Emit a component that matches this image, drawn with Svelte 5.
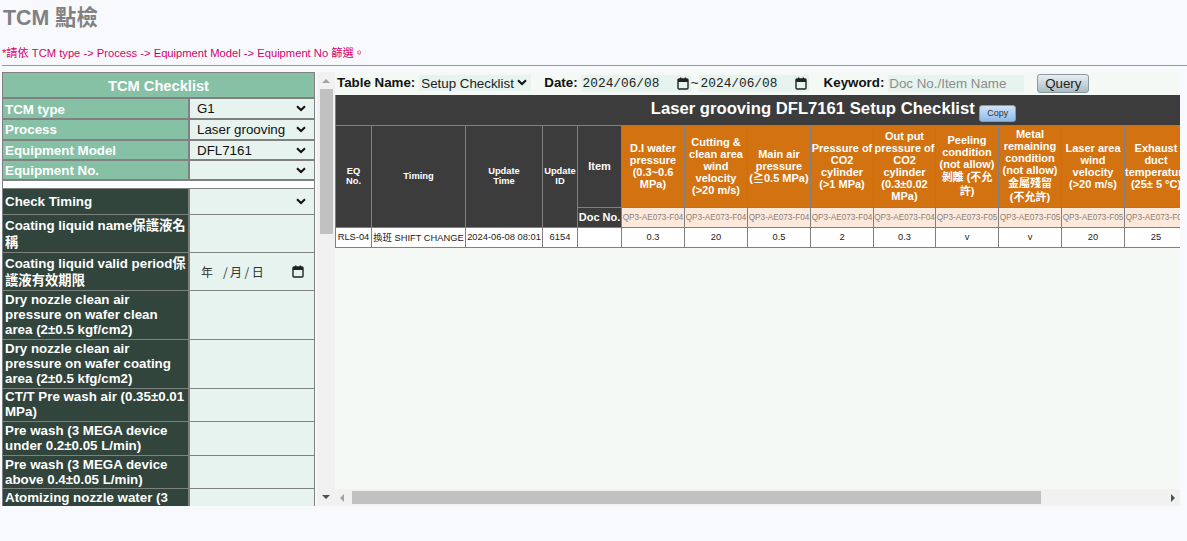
<script>
  const topRows = [
    { label: 'TCM type', value: 'G1', cls: 'h21' },
    { label: 'Process', value: 'Laser grooving', cls: 'h21' },
    { label: 'Equipment Model', value: 'DFL7161', cls: 'h20' },
    { label: 'Equipment No.', value: '', cls: 'h20' }
  ];
  const checkRows = [
    { label: 'Coating liquid name保護液名稱', h: 38, cjk: true },
    { label: 'Coating liquid valid period保護液有效期限', h: 38, date: true, cjk: true },
    { label: 'Dry nozzle clean air pressure on wafer clean area (2±0.5 kgf/cm2)', h: 49, up: true },
    { label: 'Dry nozzle clean air pressure on wafer coating area (2±0.5 kfg/cm2)', h: 49, up: true },
    { label: 'CT/T Pre wash air (0.35±0.01 MPa)', h: 33, up: true },
    { label: 'Pre wash (3 MEGA device under 0.2±0.05 L/min)', h: 34, up: true },
    { label: 'Pre wash (3 MEGA device above 0.4±0.05 L/min)', h: 33 },
    { label: 'Atomizing nozzle water (3 MEGA device)', h: 33 }
  ];
  const colW = [36, 94, 77, 35, 44, 63, 63, 63, 63, 62, 63, 63, 63, 63, 63, 81];
  const items = [
    { t: ['D.I water', 'pressure', '(0.3~0.6', 'MPa)'], d: 'QP3-AE073-F04', v: '0.3' },
    { t: ['Cutting &', 'clean area', 'wind', 'velocity', '(>20 m/s)'], d: 'QP3-AE073-F04', v: '20' },
    { t: ['Main air', 'pressure', '(≧0.5 MPa)'], d: 'QP3-AE073-F04', v: '0.5' },
    { t: ['Pressure of', 'CO2', 'cylinder', '(>1 MPa)'], d: 'QP3-AE073-F04', v: '2' },
    { t: ['Out put', 'pressure of', 'CO2', 'cylinder', '(0.3±0.02', 'MPa)'], d: 'QP3-AE073-F04', v: '0.3' },
    { t: ['Peeling', 'condition', '(not allow)', '剝離 (不允', '許)'], d: 'QP3-AE073-F05', v: 'v' },
    { t: ['Metal', 'remaining', 'condition', '(not allow)', '金屬殘留', '(不允許)'], d: 'QP3-AE073-F05', v: 'v' },
    { t: ['Laser area', 'wind', 'velocity', '(>20 m/s)'], d: 'QP3-AE073-F05', v: '20' },
    { t: ['Exhaust', 'duct', 'temperature', '(25± 5 °C)'], d: 'QP3-AE073-F05', v: '25' },
    { t: [], d: '', v: '' },
    { t: [], d: '', v: '' }
  ];
  const isCjk = (s) => /[\u4e00-\u9fff]/.test(s);
</script>

{#snippet cal()}
  <svg class="cal" width="12" height="13" viewBox="0 0 12 13" aria-hidden="true">
    <rect x="1" y="2" width="10" height="10" rx="1" fill="none" stroke="#222" stroke-width="1.4" />
    <rect x="1" y="2" width="10" height="3" fill="#222" />
    <rect x="3" y="0.5" width="1.4" height="2" fill="#222" />
    <rect x="7.6" y="0.5" width="1.4" height="2" fill="#222" />
  </svg>
{/snippet}

{#snippet chev()}
  <svg class="chev" width="10" height="7" viewBox="0 0 10 7" aria-hidden="true">
    <path d="M1 1.2 L5 5 L9 1.2" fill="none" stroke="#111" stroke-width="2" />
  </svg>
{/snippet}

<div class="page">
  <h1>TCM 點檢</h1>
  <p class="notice">*請依 TCM type -&gt; Process -&gt; Equipment Model -&gt; Equipment No 篩選。</p>
  <hr />

  <div class="main">
    <div class="left">
      <table class="side">
        <colgroup><col class="c1" /><col class="c2" /></colgroup>
        <tbody>
          <tr class="h27"><th colspan="2" class="title">TCM Checklist</th></tr>
          {#each topRows as r, i}
            <tr class={r.cls}>
              <th class="green" class:first-row={i === 0}>{r.label}</th>
              <td class="val"><div class="swrap"><select class="sel"><option>{r.value}</option></select>{@render chev()}</div></td>
            </tr>
          {/each}
          <tr class="h8"><td colspan="2" class="blank"></td></tr>
          <tr class="h26">
            <th class="dark">Check Timing</th>
            <td class="val thin"><div class="swrap"><select class="sel"><option></option></select>{@render chev()}</div></td>
          </tr>
          {#each checkRows as r}
            <tr style="height:{r.h}px">
              <th class="dark" class:cjk={r.cjk} class:up={r.up}>{r.label}</th>
              <td class="val thin">
                {#if r.date}
                  <div class="ldate"><span>年 &nbsp;/月/日</span>{@render cal()}</div>
                {/if}
              </td>
            </tr>
          {/each}
        </tbody>
      </table>
    </div>

    <div class="vbar">
      <span class="arrow up-a"></span>
      <div class="vtrack"><div class="vthumb"></div></div>
      <span class="arrow down-a"></span>
    </div>

    <div class="right">
      <div class="view">
        <div class="toolbar">
          <b class="lab">Table Name:</b>
          <div class="swrap twrap"><select class="tsel"><option>Setup Checklist</option></select>{@render chev()}</div>
          <b class="lab l2">Date:</b>
          <div class="dt first"><span>2024/06/08</span>{@render cal()}</div>
          <span class="lab tilde">~</span>
          <div class="dt"><span>2024/06/08</span>{@render cal()}</div>
          <b class="lab l3">Keyword:</b>
          <input class="kw" placeholder="Doc No./Item Name" />
          <button class="query">Query</button>
        </div>
        <table class="grid">
          <colgroup>
            {#each colW as w}<col style="width:{w}px" />{/each}
          </colgroup>
          <thead>
            <tr class="r-title">
              <th colspan="16" class="t-head">Laser grooving DFL7161 Setup Checklist <button class="copy">Copy</button></th>
            </tr>
            <tr class="r-head">
              <th rowspan="2" class="dh">EQ<br />No.</th>
              <th rowspan="2" class="dh">Timing</th>
              <th rowspan="2" class="dh">Update<br />Time</th>
              <th rowspan="2" class="dh">Update<br />ID</th>
              <th class="dh big">Item</th>
              {#each items as it}
                <th class="orange">
                  {#each it.t as line}<span class="ln" class:zh={isCjk(line)}>{line}</span>{/each}
                </th>
              {/each}
            </tr>
            <tr class="r-doc">
              <th class="dh big">Doc No.</th>
              {#each items as it}<td class="doc">{it.d}</td>{/each}
            </tr>
          </thead>
          <tbody>
            <tr class="r-data">
              <td class="cell">RLS-04</td>
              <td class="cell">換班 SHIFT CHANGE</td>
              <td class="cell">2024-06-08 08:01</td>
              <td class="cell">6154</td>
              <td class="cell"></td>
              {#each items as it}<td class="cell">{it.v}</td>{/each}
            </tr>
          </tbody>
        </table>
      </div>
      <div class="hbar">
        <span class="arrow left-a"></span>
        <div class="htrack"><div class="hthumb"></div></div>
        <span class="arrow right-a"></span>
      </div>
    </div>
  </div>
</div>

<style>
  :global(body) {
    margin: 0;
    background: #f8f9fd;
    font-family: "Liberation Sans", "Noto Sans CJK TC", sans-serif;
  }
  .page {
    height: 541px;
    overflow: hidden;
  }
  h1 {
    margin: 0;
    padding: 6px 0 0 3px;
    height: 30px;
    box-sizing: content-box;
    font-size: 21.33px;
    line-height: 24px;
    font-weight: bold;
    color: #808080;
  }
  .notice {
    margin: 0;
    padding: 10px 0 0 2px;
    height: 15px;
    font-size: 11.2px;
    line-height: 15px;
    color: #d6006c;
  }
  hr {
    margin: 4px 0 6px 2px;
    border: 0;
    height: 1px;
    background: #999;
  }
  .main {
    display: flex;
    height: 434px;
    width: 1180px;
    padding-left: 2px;
    box-sizing: border-box;
  }
  .left {
    width: 313px;
    flex: none;
    overflow: hidden;
  }
  .side {
    width: 313px;
    table-layout: fixed;
    border-collapse: separate;
    border-spacing: 0;
    font-size: 13.33px;
  }
  .c1 { width: 188px; }
  .side th, .side td {
    padding: 0 2px 0 2px;
    text-align: left;
    font-weight: bold;
    color: #fff;
    border-left: 1px solid #808080;
    border-right: 1px solid #808080;
    border-bottom: 1px solid #808080;
    box-sizing: border-box;
    line-height: 15px;
  }
  .side th.cjk { line-height: 17px; }
  .side th.up { padding-bottom: 2px; }
  .side th + td { border-left: 0; }
  .side th:first-child:not(:last-child) { border-right: 2px solid #808080; }
  .h27 { height: 27px; }
  .h21 { height: 21px; }
  .h20 { height: 20px; }
  .h8 { height: 8px; }
  .h26 { height: 26px; }
  .side th.title {
    background: #86c1a6;
    text-align: center;
    font-size: 14.67px;
    padding-top: 2px;
    border-top: 1px solid #808080;
    border-bottom: 2px solid #808080;
  }
  .side th.green {
    background: #86c1a6;
    border-bottom: 2px solid #808080;
  }
  .side th.green.first-row { padding-top: 1px; }
  .side th.dark { background: #31453d; }
  .side td.val {
    background: #e6f3ee;
    padding: 0 3px 0 3px;
    border-bottom: 2px solid #808080;
  }
  .side td.val.thin { border-bottom: 1px solid #808080; }
  .side td.blank {
    background: #fff;
    padding: 0;
    font-size: 0;
    line-height: 0;
  }
  .swrap { position: relative; }
  .chev { position: absolute; right: 5px; top: 5px; pointer-events: none; }
  .sel {
    width: 100%;
    height: 17px;
    border: 0;
    padding: 0 0 0 4px;
    appearance: none;
    background: #e6f3ee;
    color: #111;
    font: 13.33px "Liberation Sans", sans-serif;
    outline: none;
    display: block;
  }
  .ldate {
    display: flex;
    align-items: center;
    justify-content: space-between;
    padding: 0 7px 0 8px;
    font: 12px "Noto Sans CJK TC", sans-serif;
    letter-spacing: 2.5px;
    word-spacing: -1.5px;
    color: #333;
  }
  .cal { flex: none; display: block; }

  .vbar {
    width: 18px;
    margin-left: 2px;
    flex: none;
    background: #f1f1f1;
    display: flex;
    flex-direction: column;
    align-items: center;
  }
  .vtrack { flex: 1; width: 100%; padding: 0 2px 0 3px; box-sizing: border-box; }
  .vthumb { height: 145px; background: #c1c1c1; }
  .arrow { display: block; width: 0; height: 0; flex: none; border-style: solid; border-color: transparent; }
  .arrow.up-a {
    margin: 7px 0 6px;
    border-width: 0 4px 4px;
    border-bottom-color: #a3a3a3;
  }
  .arrow.down-a {
    margin: 6px 0 7px;
    border-width: 4px 4px 0;
    border-top-color: #505050;
  }

  .right {
    flex: 1;
    min-width: 0;
    display: flex;
    flex-direction: column;
  }
  .view {
    flex: 1;
    min-height: 0;
    overflow: hidden;
    background: #f4f9f6;
  }
  .toolbar {
    height: 23px;
    display: flex;
    align-items: center;
    padding-left: 2px;
    font-size: 13.33px;
    color: #111;
    white-space: nowrap;
  }
  .lab { line-height: 15px; margin-bottom: 2px; font-weight: bold; }
  .tilde { font-weight: normal; width: 8px; text-align: center; }
  .twrap { width: 112px; margin-left: 4px; margin-bottom: 1px; }
  .twrap .chev { right: 4px; top: 4px; }
  .tsel {
    display: block;
    width: 100%;
    height: 16px;
    border: 0;
    padding: 0 0 0 2px;
    appearance: none;
    background: #e6f3ee;
    font: 13.33px "Liberation Sans", sans-serif;
    color: #222;
    outline: none;
  }
  .l2 { margin-left: 13px; }
  .dt {
    width: 110px;
    height: 17px;
    box-sizing: border-box;
    padding: 0 2px 0 2px;
    display: flex;
    align-items: center;
    justify-content: space-between;
    background: #e6f3ee;
    font: 12.8px "Liberation Mono", monospace;
    color: #222;
  }
  .dt.first { margin-left: 3px; }
  .l3 { margin-left: 15px; }
  .kw {
    width: 136px;
    height: 17px;
    margin-left: 4px;
    box-sizing: border-box;
    border: 0;
    padding: 0 1px;
    background: #e6f3ee;
    font: 13.33px "Liberation Sans", sans-serif;
    outline: none;
  }
  .kw::placeholder { color: #8c8c8c; opacity: 1; }
  .query {
    width: 52px;
    height: 19px;
    margin-left: 13px;
    padding: 0;
    border: 1px solid #8b9aa0;
    border-radius: 3px;
    background: linear-gradient(#e9eef0, #a9bcc4);
    font: 13.33px "Liberation Sans", sans-serif;
    color: #222;
  }

  .grid {
    table-layout: fixed;
    width: 996px;
    border-collapse: collapse;
    background: #fff;
  }
  .grid th, .grid td {
    border: 1px solid #808080;
    padding: 0;
    text-align: center;
    vertical-align: middle;
    overflow: hidden;
  }
  .r-title { height: 30px; }
  .r-head { height: 82px; }
  .r-doc { height: 20px; }
  .r-data { height: 20px; }
  .grid .t-head {
    background: #3c3c3c;
    color: #fff;
    font-size: 16.67px;
    font-weight: bold;
    border-top: 0;
    white-space: nowrap;
    line-height: 20px;
    vertical-align: top;
    padding-top: 4px;
    height: 30px;
    box-sizing: border-box;
  }
  .copy {
    width: 37px;
    height: 17px;
    padding: 0;
    vertical-align: -2px;
    border: 1px solid #8b9aa0;
    border-radius: 3px;
    background: linear-gradient(#cfe4f8, #8fbbea);
    font: 9px "Liberation Sans", sans-serif;
    color: #333;
  }
  .grid .dh {
    background: #3c3c3c;
    color: #fff;
    font-size: 9.33px;
    line-height: 10px;
    font-weight: bold;
  }
  .grid .dh.big { font-size: 11px; white-space: nowrap; }
  .grid .orange {
    background: #d27210;
    color: #fff;
    font-size: 11px;
    line-height: 12px;
    font-weight: bold;
  }
  .ln { display: block; white-space: nowrap; }
  .ln.zh { line-height: 14px; }
  .grid .doc {
    background: #fce9dc;
    color: #8a8078;
    font-size: 8.2px;
    white-space: nowrap;
  }
  .grid .cell {
    background: #fff;
    color: #222;
    font-size: 9.33px;
    white-space: nowrap;
    padding-bottom: 1px;
  }

  .hbar {
    height: 17px;
    flex: none;
    background: #f1f1f1;
    display: flex;
    align-items: center;
  }
  .htrack { flex: 1; height: 13px; padding-left: 1px; }
  .hthumb { width: 689px; height: 13px; background: #c1c1c1; }
  .arrow.left-a {
    margin-left: 5px;
    margin-right: 7px;
    border-width: 4px 4px 4px 0;
    border-right-color: #a3a3a3;
  }
  .arrow.right-a {
    margin-right: 5px;
    border-width: 4px 0 4px 4px;
    border-left-color: #505050;
  }
</style>
